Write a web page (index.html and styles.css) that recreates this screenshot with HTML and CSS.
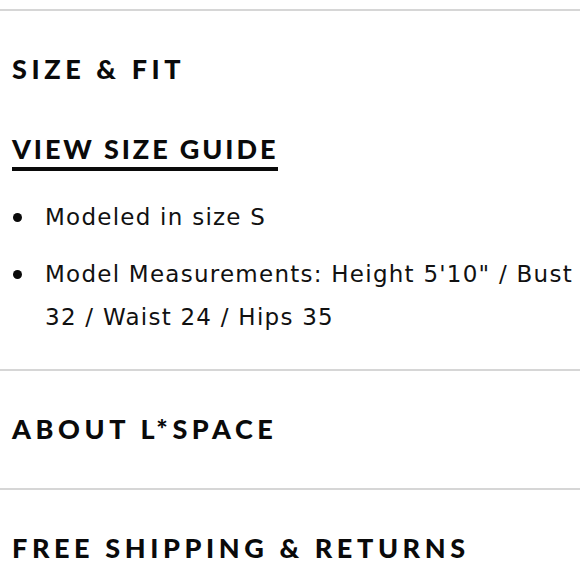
FILE: index.html
```html
<!DOCTYPE html>
<html>
<head>
<meta charset="utf-8">
<link rel="stylesheet" href="styles.css">
</head>
<body>
<div class="accordion">
  <section class="panel panel-open">
    <h2 class="panel-title">SIZE &amp; FIT</h2>
    <a class="guide-link" href="#">VIEW SIZE GUIDE</a>
    <ul class="fit-list">
      <li>Modeled in size S</li>
      <li>Model Measurements: Height 5'10" / Bust 32 / Waist 24 / Hips 35</li>
    </ul>
  </section>
  <section class="panel">
    <h2 class="panel-title">ABOUT L*SPACE</h2>
  </section>
  <section class="panel">
    <h2 class="panel-title">FREE SHIPPING &amp; RETURNS</h2>
  </section>
</div>
</body>
</html>
```
FILE: styles.css
```css
html, body {
  margin: 0;
  padding: 0;
  background: #fff;
}
body {
  padding-top: 9px;
  color: #0a0a0a;
}
.accordion {
  display: flex;
  flex-direction: column;
}
.panel {
  border-top: 2px solid #d6d6d6;
  padding: 44px 0 46px 12px;
}
.panel-title {
  margin: 0;
  font-family: "Lato", sans-serif;
  font-weight: 900;
  font-size: 27px;
  line-height: 27px;
  letter-spacing: 4.6px;
}
.panel-open {
  padding-bottom: 0;
}
.guide-link {
  display: inline-block;
  margin-top: 53px;
  font-family: "Lato", sans-serif;
  font-weight: 900;
  font-size: 27px;
  line-height: 27px;
  letter-spacing: 2.9px;
  color: #0a0a0a;
  text-decoration: none;
  padding-bottom: 5px;
  border-bottom: 4px solid #0a0a0a;
}
.fit-list {
  list-style: none;
  margin: 25px 0 0;
  padding: 0 0 30px;
  font-family: "DejaVu Sans", sans-serif;
  font-size: 23px;
  letter-spacing: 1.25px;
  line-height: 43px;
  color: #111;
}
.fit-list li {
  position: relative;
  padding-left: 33px;
  margin-bottom: 14px;
}
.fit-list li:last-child {
  margin-bottom: 0;
}
.fit-list li::before {
  content: "";
  position: absolute;
  left: 1px;
  top: 17px;
  width: 9px;
  height: 9px;
  border-radius: 50%;
  background: #0a0a0a;
}
```
